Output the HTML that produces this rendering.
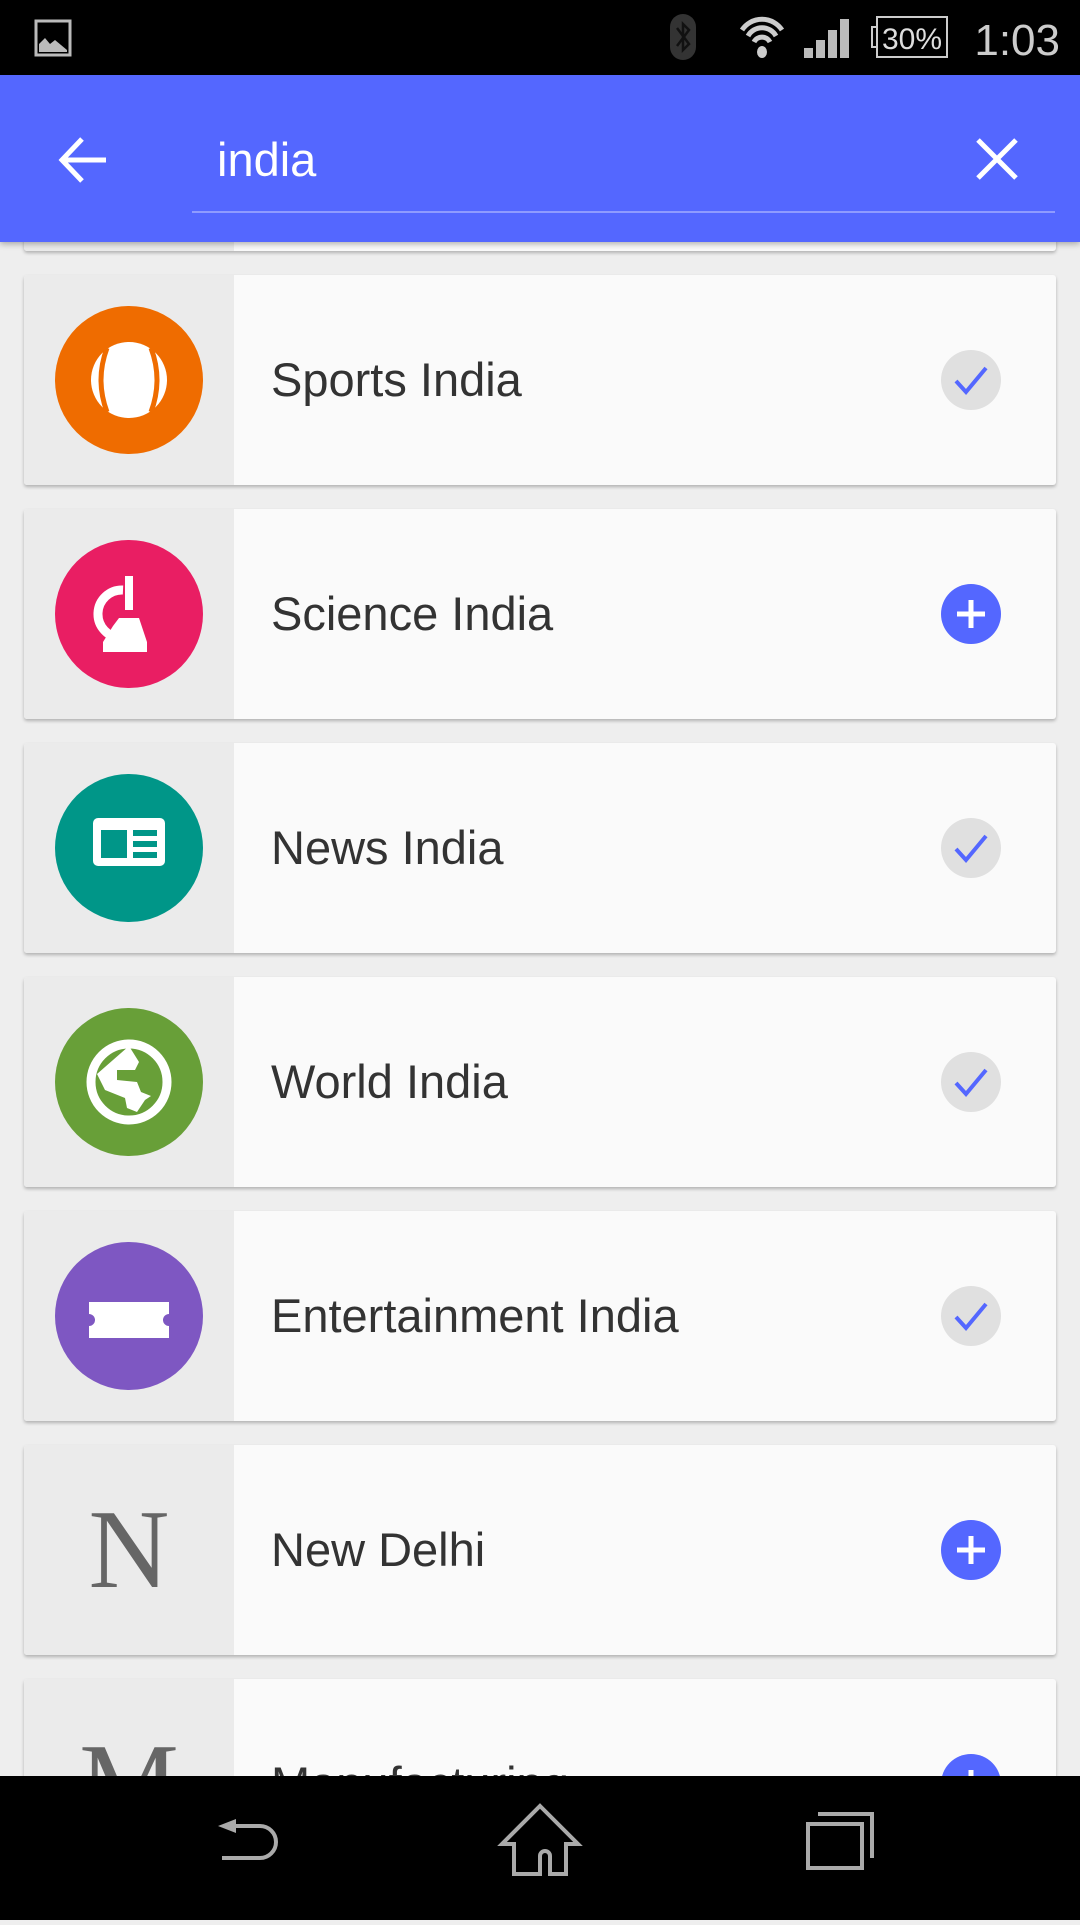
<!DOCTYPE html>
<html><head><style>
*{margin:0;padding:0;box-sizing:border-box}
body{width:1080px;height:1920px;overflow:hidden;background:#eeeeee;font-family:"Liberation Sans",sans-serif;position:relative}
.status{position:absolute;left:0;top:0;width:1080px;height:75px;background:#000;z-index:7}
.bar{position:absolute;left:0;top:75px;width:1080px;height:167px;background:#5467ff;box-shadow:0 2px 6px rgba(0,0,0,.3);z-index:5}
.card{position:absolute;left:24px;width:1032px;height:210px;background:#fafafa;border-radius:3px;box-shadow:0 2px 3px rgba(0,0,0,.25);overflow:hidden}
.card .side{position:absolute;left:0;top:0;width:210px;height:210px;background:#ebebeb}
.card .ic{position:absolute;left:31px;top:31px;width:148px;height:148px;border-radius:50%}
.card .t{position:absolute;left:247px;top:0;line-height:210px;font-size:47px;color:#333}
.card .r{position:absolute;left:917px;top:75px;width:60px;height:60px;border-radius:50%}
.chk{background:#e0e0e0}.add{background:#5467ff}
.nav{position:absolute;left:0;top:1776px;width:1080px;height:144px;background:#000;z-index:6}
.letter{position:absolute;left:0;top:0;width:210px;text-align:center;line-height:210px;font-family:"Liberation Serif",serif;font-size:112px;color:#666}
</style></head><body>
<div class="status">
<svg width="1080" height="75" style="position:absolute;left:0;top:0">
<rect x="36" y="21" width="34" height="34" fill="none" stroke="#bbb" stroke-width="3"/>
<path d="M39 52 L39 44 L45 38 L50 44 L55 40 L67 50 L67 52Z" fill="#bbb"/>
<rect x="670" y="14" width="26" height="46" rx="13" fill="#333"/>
<path d="M677 28 L689 44 L683 50 L683 24 L689 30 L677 46" stroke="#111" stroke-width="2.5" fill="none"/>
<path d="M742 30 a24 24 0 0 1 40 0 M748 36 a16 16 0 0 1 28 0 M754 42 a9 9 0 0 1 16 0" stroke="#ccc" stroke-width="5" fill="none"/>
<ellipse cx="762" cy="52" rx="5" ry="6" fill="#ccc"/>
<rect x="804" y="48" width="9" height="10" fill="#bbb"/><rect x="816" y="40" width="9" height="18" fill="#bbb"/><rect x="828" y="30" width="9" height="28" fill="#bbb"/><rect x="840" y="19" width="9" height="39" fill="#bbb"/>
<rect x="877" y="17" width="70" height="40" fill="none" stroke="#ccc" stroke-width="2"/>
<path d="M877 27 h-5 v20 h5" stroke="#ccc" stroke-width="2" fill="none"/>
<text x="912" y="49" text-anchor="middle" font-size="30" fill="#ddd" font-family="Liberation Sans">30%</text>
<text x="1060" y="55" text-anchor="end" font-size="44" fill="#ccc" font-family="Liberation Sans">1:03</text>
</svg>
</div>
<div class="bar">
<svg width="1080" height="167" style="position:absolute;left:0;top:0">
<path d="M64 85 H106 M82 64 L62 85 L82 106" stroke="#fff" stroke-width="5" fill="none"/>
<path d="M978 65 L1016 103 M1016 65 L978 103" stroke="#fff" stroke-width="5" fill="none"/>
<rect x="192" y="136" width="863" height="2" fill="#8f9bff"/>
<text x="217" y="101" font-size="47" fill="#fff" font-family="Liberation Sans">india</text>
</svg>
</div>
<div class="card" style="top:41px"><div class="side"></div></div>

<div class="card" style="top:275px"><div class="side"></div>
<div class="ic" style="background:#ef6c00"><svg width="148" height="148"><circle cx="74" cy="74" r="38" fill="#fff"/><path d="M52 42 Q40 74 52 106 M96 42 Q108 74 96 106" stroke="#ef6c00" stroke-width="5" fill="none"/></svg></div>
<div class="t">Sports India</div>
<div class="r chk"><svg width="60" height="60"><path d="M15 31 L25 42 L45 18" stroke="#5467ff" stroke-width="4" fill="none"/></svg></div></div>

<div class="card" style="top:509px"><div class="side"></div>
<div class="ic" style="background:#e91e63"><svg width="148" height="148"><rect x="70" y="36" width="8" height="34" fill="#fff"/><path d="M68 50 a24 24 0 0 0 -2 48" stroke="#fff" stroke-width="9" fill="none"/><path d="M64 78 h20 l8 24 v10 h-44 v-10 l10-16z" fill="#fff"/></svg></div>
<div class="t">Science India</div>
<div class="r add"><svg width="60" height="60"><path d="M30 16 V44 M16 30 H44" stroke="#fff" stroke-width="5"/></svg></div></div>

<div class="card" style="top:743px"><div class="side"></div>
<div class="ic" style="background:#009688"><svg width="148" height="148"><rect x="38" y="44" width="72" height="48" rx="5" fill="#fff"/><rect x="46" y="56" width="26" height="28" fill="#009688"/><rect x="78" y="56" width="24" height="6" fill="#009688"/><rect x="78" y="67" width="24" height="6" fill="#009688"/><rect x="78" y="78" width="24" height="6" fill="#009688"/><rect x="46" y="52" width="56" height="2" fill="#fff"/></svg></div>
<div class="t">News India</div>
<div class="r chk"><svg width="60" height="60"><path d="M15 31 L25 42 L45 18" stroke="#5467ff" stroke-width="4" fill="none"/></svg></div></div>

<div class="card" style="top:977px"><div class="side"></div>
<div class="ic" style="background:#689f38"><svg width="148" height="148"><circle cx="74" cy="74" r="38" fill="none" stroke="#fff" stroke-width="9"/><path d="M42 66 L50 82 L70 90 L72 100 L82 104 L90 92 L96 88 L86 84 L82 74 L62 72 L62 62 L80 62 L84 54 L74 38 Z" fill="#fff"/></svg></div>
<div class="t">World India</div>
<div class="r chk"><svg width="60" height="60"><path d="M15 31 L25 42 L45 18" stroke="#5467ff" stroke-width="4" fill="none"/></svg></div></div>

<div class="card" style="top:1211px"><div class="side"></div>
<div class="ic" style="background:#7e57c2"><svg width="148" height="148"><path d="M34 60 H114 V72 a6 6 0 0 0 0 12 V96 H34 V84 a6 6 0 0 0 0 -12 Z" fill="#fff"/></svg></div>
<div class="t">Entertainment India</div>
<div class="r chk"><svg width="60" height="60"><path d="M15 31 L25 42 L45 18" stroke="#5467ff" stroke-width="4" fill="none"/></svg></div></div>

<div class="card" style="top:1445px"><div class="side"></div>
<div class="letter">N</div>
<div class="t">New Delhi</div>
<div class="r add"><svg width="60" height="60"><path d="M30 16 V44 M16 30 H44" stroke="#fff" stroke-width="5"/></svg></div></div>

<div class="card" style="top:1679px"><div class="side"></div>
<div class="letter">M</div>
<div class="t">Manufacturing</div>
<div class="r add"><svg width="60" height="60"><path d="M30 16 V44 M16 30 H44" stroke="#fff" stroke-width="5"/></svg></div></div>

<div class="nav">
<svg width="1080" height="144">
<path d="M218 50 L236 43 L236 57 Z" fill="#aaa"/>
<path d="M232 50 H260 a16 16 0 0 1 0 32 H222" stroke="#aaa" stroke-width="4" fill="none"/>
<path d="M540 30 L578 68 H566 V98 H550 V80 a5 5 0 0 0 -10 0 V98 H514 V68 H502 Z" stroke="#aaa" stroke-width="4" fill="none" stroke-linejoin="miter"/>
<rect x="808" y="48" width="54" height="44" stroke="#aaa" stroke-width="4" fill="none"/>
<path d="M818 38 H872 V82" stroke="#aaa" stroke-width="4" fill="none"/>
</svg>
</div>
</body></html>
